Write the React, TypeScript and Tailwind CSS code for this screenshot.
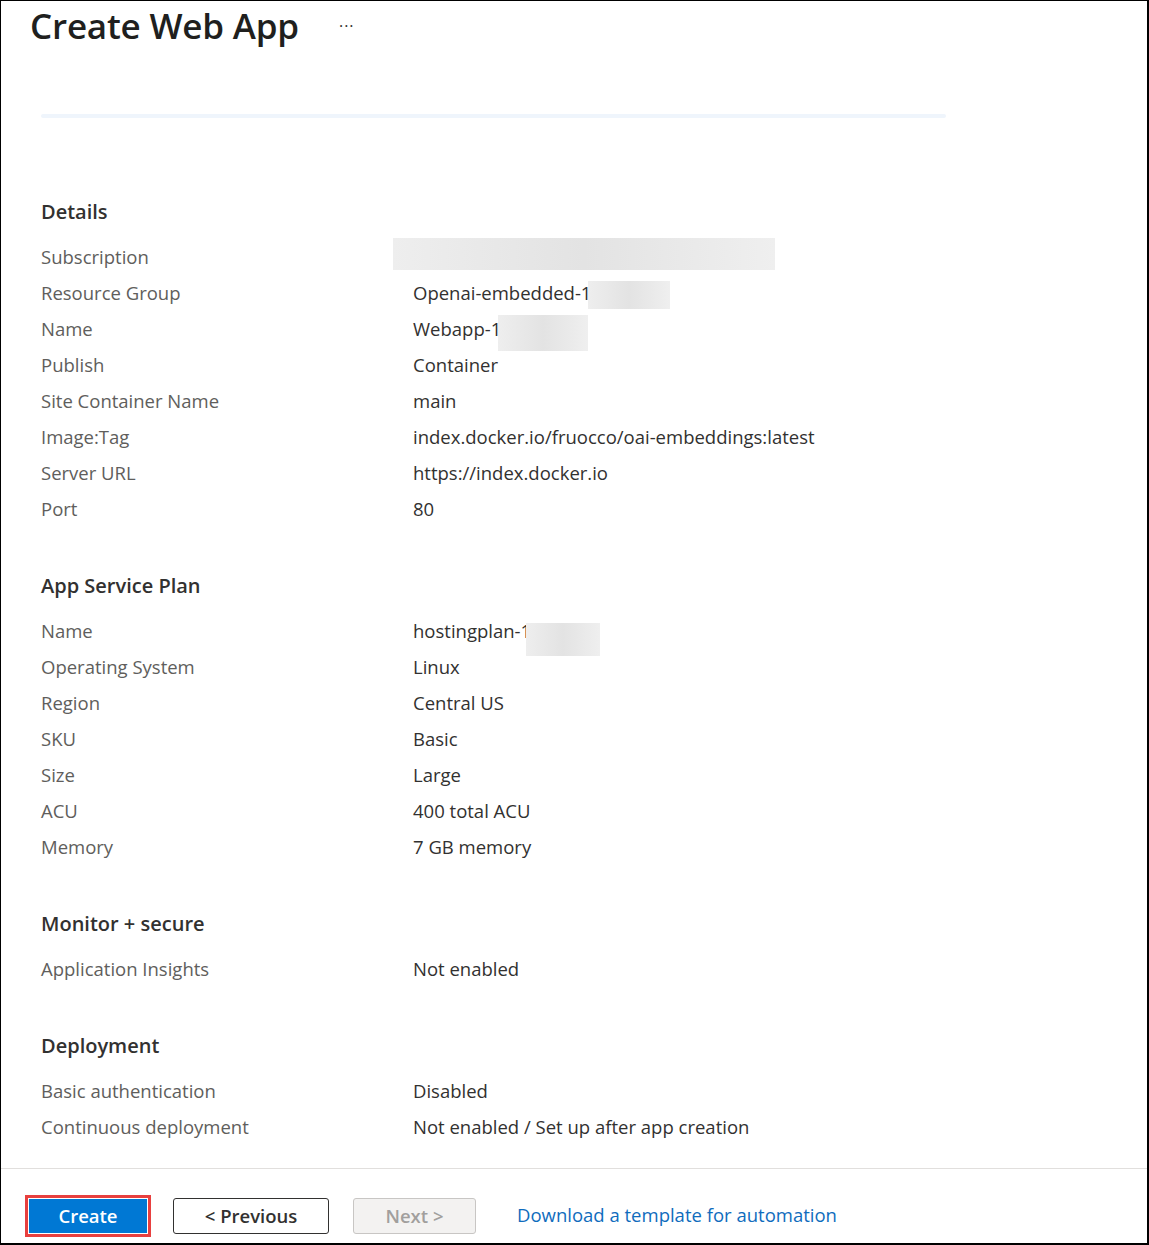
import React from 'react';

type Mask = { left: number; width: number; top: number; height: number };
type Row = { label: string; value: string; mask?: Mask };

// masks are placed relative to the row box (left = from value column)
const sections: { title: string; rows: Row[] }[] = [
    {
        title: 'Details',
        rows: [
            { label: 'Subscription', value: '', mask: { left: -20, width: 382, top: -1, height: 32 } },
            { label: 'Resource Group', value: 'Openai-embedded-1', mask: { left: 175, width: 82, top: 6, height: 28 } },
            { label: 'Name', value: 'Webapp-1', mask: { left: 85, width: 90, top: 4, height: 36 } },
            { label: 'Publish', value: 'Container' },
            { label: 'Site Container Name', value: 'main' },
            { label: 'Image:Tag', value: 'index.docker.io/fruocco/oai-embeddings:latest' },
            { label: 'Server URL', value: 'https://index.docker.io' },
            { label: 'Port', value: '80' },
        ],
    },
    {
        title: 'App Service Plan',
        rows: [
            { label: 'Name', value: 'hostingplan-1', mask: { left: 113, width: 74, top: 10, height: 33 } },
            { label: 'Operating System', value: 'Linux' },
            { label: 'Region', value: 'Central US' },
            { label: 'SKU', value: 'Basic' },
            { label: 'Size', value: 'Large' },
            { label: 'ACU', value: '400 total ACU' },
            { label: 'Memory', value: '7 GB memory' },
        ],
    },
    {
        title: 'Monitor + secure',
        rows: [{ label: 'Application Insights', value: 'Not enabled' }],
    },
    {
        title: 'Deployment',
        rows: [
            { label: 'Basic authentication', value: 'Disabled' },
            { label: 'Continuous deployment', value: 'Not enabled / Set up after app creation' },
        ],
    },
];

const font = { fontFamily: '"Open Sans", "Noto Sans", sans-serif' };

export default function App() {
    return (
        <div
            className="w-[1149px] h-[1245px] bg-white border-l border-t border-r-2 border-b-2 border-black flex flex-col overflow-hidden"
            style={font}
        >
            {/* header */}
            <div className="flex items-center h-[48px] pl-[29px]">
                <h1 className="text-[35px] font-semibold text-[#201f1e] leading-none tracking-[-0.2px]">Create Web App</h1>
                <span className="ml-[40px] mt-[2px] text-[16px] text-[#323130] tracking-[1px]">···</span>
            </div>

            <div className="mt-[65px] ml-[40px] w-[905px] h-[4px] rounded-full bg-[#eff5fc]" />

            <div className="flex-1 pl-[40px] pt-[76px] flex flex-col gap-[41px]">
                {sections.map((s) => (
                    <div key={s.title}>
                        <div className="h-[36px] mb-[9px] flex items-center text-[20px] font-semibold text-[#323130]">
                            {s.title}
                        </div>
                        {s.rows.map((r) => (
                            <div key={r.label} className="relative h-[36px] flex items-center text-[18.5px]">
                                <div className="w-[372px] text-[#605e5c]">{r.label}</div>
                                <div className="text-[#323130]">{r.value}</div>
                                {r.mask && (
                                    <span
                                        className="absolute bg-gradient-to-r from-[#eeeeee] via-[#e3e3e3] to-[#efefef]"
                                        style={{ left: 372 + r.mask.left, width: r.mask.width, top: r.mask.top, height: r.mask.height }}
                                    />
                                )}
                            </div>
                        ))}
                    </div>
                ))}
            </div>

            {/* footer */}
            <div className="border-t border-[#e1dfdd] h-[75px] flex items-start pl-[24px] pt-[26px]">
                <div className="border-[3px] border-[#e8403f] p-[1px]">
                    <button className="w-[118px] h-[34px] bg-[#0078d4] text-white text-[18.5px] font-semibold flex items-center justify-center">
                        Create
                    </button>
                </div>
                <button className="ml-[22px] mt-[3px] w-[156px] h-[36px] border border-[#323130] rounded-[3px] text-[#323130] text-[18.5px] font-semibold flex items-center justify-center">
                    &lt; Previous
                </button>
                <button className="ml-[24px] mt-[3px] w-[123px] h-[36px] border border-[#c8c6c4] bg-[#f3f2f1] rounded-[3px] text-[#a19f9d] text-[18.5px] font-semibold flex items-center justify-center">
                    Next &gt;
                </button>
                <a className="ml-[41px] mt-[6px] text-[#0f6cbd] text-[18.5px]">Download a template for automation</a>
            </div>
        </div>
    );
}
